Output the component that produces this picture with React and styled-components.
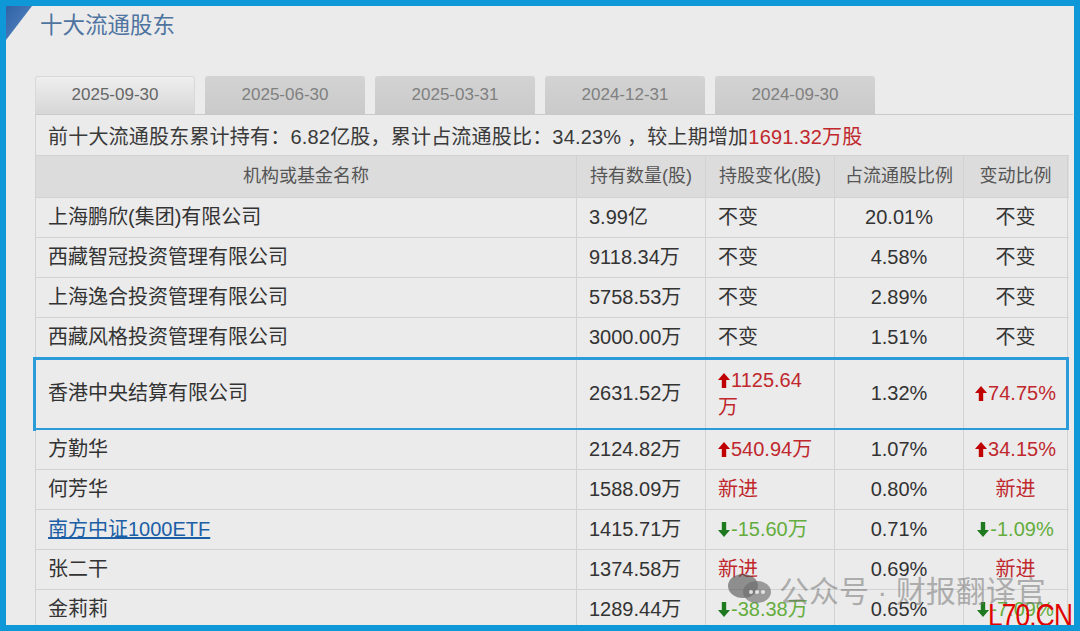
import styled, { createGlobalStyle } from "styled-components";

const GlobalStyle = createGlobalStyle`
  html, body {
    margin: 0;
    padding: 0;
    overflow: hidden;
    background: #0e98d8;
  }
`;

const Frame = styled.div`
  position: relative;
  width: 1080px;
  height: 631px;
  box-sizing: border-box;
  border: 6px solid #0e98d8;
  background: #ebebeb;
  overflow: hidden;
  font-family: "Liberation Sans", "Noto Sans CJK SC", sans-serif;
  color: #333;
`;

const Corner = styled.svg`
  position: absolute;
  top: 0;
  left: 0;
`;

const Title = styled.div`
  height: 70px;
  padding-left: 34px;
  line-height: 40px;
  font-size: 22.5px;
  color: #4f74a0;
`;

const Panel = styled.div`
  margin-left: 29px;
  width: 1038px;
`;

const Tabs = styled.div`
  display: flex;
  gap: 10px;
  height: 38px;
  border-bottom: 1px solid #c9c9c9;
`;

const Tab = styled.div`
  width: 160px;
  height: 38px;
  display: flex;
  align-items: center;
  justify-content: center;
  border-radius: 3px 3px 0 0;
  font-size: 17px;
  color: ${(p) => (p.active ? "#666" : "#808080")};
  background: ${(p) =>
    p.active
      ? "linear-gradient(#efefef, #d6d6d6)"
      : "linear-gradient(#d3d3d3, #cacaca)"};
  box-shadow: ${(p) => (p.active ? "inset 0 0 0 1px #d8d8d8" : "none")};
`;

const Summary = styled.div`
  height: 40px;
  display: flex;
  align-items: center;
  padding-left: 12px;
  font-size: 20px;
  letter-spacing: 0.2px;
  color: #3a3a3a;
  border-left: 1px solid #d2d2d2;
`;

const Red = styled.span`
  color: #c0282d;
`;

const Table = styled.div`
  width: 1033px;
  border-left: 1px solid #d2d2d2;
`;

const Row = styled.div`
  position: relative;
  display: grid;
  grid-template-columns: 541px 129px 129px 129px 104px;
  height: ${(p) => p.h}px;
  box-sizing: border-box;
  border-bottom: 1px solid #d2d2d2;
  border-top: ${(p) => (p.head ? "1px solid #d2d2d2" : "none")};
  background: ${(p) => (p.head ? "#dcdcdc" : "#ebebeb")};

  &::after {
    content: "";
    display: ${(p) => (p.focus ? "block" : "none")};
    position: absolute;
    top: -1px;
    left: -3px;
    right: 0;
    bottom: -2px;
    border: 3px solid #2b9bd9;
    pointer-events: none;
  }
`;

const Cell = styled.div`
  display: flex;
  align-items: center;
  justify-content: ${(p) => (p.center ? "center" : "flex-start")};
  padding: 0 ${(p) => (p.center ? 0 : p.pr || 0)}px 0
    ${(p) => (p.center ? 0 : 12)}px;
  border-right: 1px solid #d2d2d2;
  font-size: ${(p) => (p.head ? 18 : 20)}px;
  color: ${(p) => (p.head ? "#555" : "#333")};
  white-space: ${(p) => (p.wrap ? "normal" : "nowrap")};
  overflow: hidden;
  line-height: 27px;
  box-sizing: border-box;
`;

const Link = styled.a`
  color: #1c5fa6;
  text-decoration: underline;
`;

const Change = styled.span`
  color: ${(p) =>
    p.kind === "down" ? "#64ad3c" : p.kind === "same" ? "#333" : "#c0282d"};
`;

const ArrowIcon = styled.svg`
  display: inline-block;
  margin-right: 1px;
  vertical-align: -1px;
`;

const Watermark = styled.div`
  position: absolute;
  left: 721px;
  top: 561px;
  display: flex;
  align-items: center;
  gap: 6px;
  font-size: 30px;
  color: rgba(110, 110, 110, 0.5);
  pointer-events: none;
`;

const Stamp = styled.div`
  position: absolute;
  left: 982px;
  top: 591px;
  font-size: 32px;
  color: #e00000;
  transform: scaleX(0.82);
  transform-origin: left top;
  letter-spacing: -1px;
`;

const Arrow = ({ dir }) => (
  <ArrowIcon width="12" height="15" viewBox="0 0 12 15">
    {dir === "up" ? (
      <path d="M6 0 L12 7 H8.2 V15 H3.8 V7 H0 Z" fill="#c00000" />
    ) : (
      <path d="M6 15 L12 8 H8.2 V0 H3.8 V8 H0 Z" fill="#1f7a1f" />
    )}
  </ArrowIcon>
);

const Value = ({ v }) => {
  if (v.kind === "same") return <Change kind="same">不变</Change>;
  if (v.kind === "new") return <Change kind="new">新进</Change>;
  return (
    <Change kind={v.kind}>
      <Arrow dir={v.kind} />
      {v.text}
    </Change>
  );
};

const tabs = ["2025-09-30", "2025-06-30", "2025-03-31", "2024-12-31", "2024-09-30"];

const same = { kind: "same" };
const fresh = { kind: "new" };

const rows = [
  { name: "上海鹏欣(集团)有限公司", hold: "3.99亿", change: same, ratio: "20.01%", vary: same },
  { name: "西藏智冠投资管理有限公司", hold: "9118.34万", change: same, ratio: "4.58%", vary: same },
  { name: "上海逸合投资管理有限公司", hold: "5758.53万", change: same, ratio: "2.89%", vary: same },
  { name: "西藏风格投资管理有限公司", hold: "3000.00万", change: same, ratio: "1.51%", vary: same },
  {
    name: "香港中央结算有限公司",
    hold: "2631.52万",
    change: { kind: "up", text: "1125.64万" },
    ratio: "1.32%",
    vary: { kind: "up", text: "74.75%" },
    focus: true,
  },
  {
    name: "方勤华",
    hold: "2124.82万",
    change: { kind: "up", text: "540.94万" },
    ratio: "1.07%",
    vary: { kind: "up", text: "34.15%" },
  },
  { name: "何芳华", hold: "1588.09万", change: fresh, ratio: "0.80%", vary: fresh },
  {
    name: "南方中证1000ETF",
    link: true,
    hold: "1415.71万",
    change: { kind: "down", text: "-15.60万" },
    ratio: "0.71%",
    vary: { kind: "down", text: "-1.09%" },
  },
  { name: "张二干", hold: "1374.58万", change: fresh, ratio: "0.69%", vary: fresh },
  {
    name: "金莉莉",
    hold: "1289.44万",
    change: { kind: "down", text: "-38.38万" },
    ratio: "0.65%",
    vary: { kind: "down", text: "-7.09%" },
  },
];

const WeChat = () => (
  <svg width="46" height="32" viewBox="0 0 46 32">
    <ellipse cx="16" cy="13" rx="15" ry="12" fill="rgba(80,80,80,0.6)" />
    <ellipse cx="30" cy="19" rx="14" ry="11" fill="rgba(110,110,110,0.65)" />
    <circle cx="24" cy="19" r="2" fill="rgba(235,235,235,0.9)" />
    <circle cx="30" cy="19" r="2" fill="rgba(235,235,235,0.9)" />
    <circle cx="36" cy="19" r="2" fill="rgba(235,235,235,0.9)" />
  </svg>
);

export default function App() {
  return (
    <>
      <GlobalStyle />
      <Frame>
        <Corner width="40" height="40" viewBox="0 0 40 40">
          <defs>
            <linearGradient id="cg" x1="0" y1="0" x2="1" y2="1">
              <stop offset="0" stopColor="#2f62a6" />
              <stop offset="1" stopColor="#5a8ac4" />
            </linearGradient>
          </defs>
          <path d="M0 0 H26 L0 34 Z" fill="url(#cg)" />
        </Corner>
        <Title>十大流通股东</Title>
        <Panel>
          <Tabs>
            {tabs.map((t, i) => (
              <Tab key={t} active={i === 0}>
                {t}
              </Tab>
            ))}
          </Tabs>
          <Summary>
            前十大流通股东累计持有：6.82亿股，累计占流通股比：34.23% ，较上期增加
            <Red>1691.32万股</Red>
          </Summary>
          <Table>
            <Row head h={43}>
              <Cell head center>机构或基金名称</Cell>
              <Cell head center>持有数量(股)</Cell>
              <Cell head center>持股变化(股)</Cell>
              <Cell head center>占流通股比例</Cell>
              <Cell head center>变动比例</Cell>
            </Row>
            {rows.map((r) => (
              <Row key={r.name} h={r.focus ? 72 : 40} focus={r.focus}>
                <Cell>{r.link ? <Link>{r.name}</Link> : r.name}</Cell>
                <Cell>{r.hold}</Cell>
                <Cell wrap={r.focus} pr={r.focus ? 20 : 0}>
                  <Value v={r.change} />
                </Cell>
                <Cell center>{r.ratio}</Cell>
                <Cell center>
                  <Value v={r.vary} />
                </Cell>
              </Row>
            ))}
          </Table>
        </Panel>
        <Watermark>
          <WeChat />
          公众号 · 财报翻译官
        </Watermark>
        <Stamp>L70.CN</Stamp>
      </Frame>
    </>
  );
}
